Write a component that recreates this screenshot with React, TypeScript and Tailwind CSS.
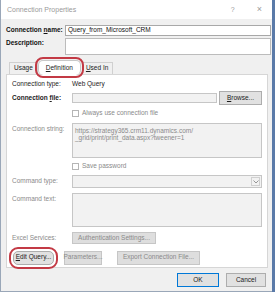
import React from "react";

const txt = "text-[6.5px] leading-none font-['Liberation_Sans',Arial,sans-serif]";

const Button = ({
  children,
  className = "",
  disabled = false,
}: {
  children: React.ReactNode;
  className?: string;
  disabled?: boolean;
}) => (
  <div
    className={`flex items-center justify-center border ${
      disabled
        ? "border-[#c6c6c6] bg-[#dedede] text-[#8a8a8a]"
        : "border-[#adadad] bg-[#e1e1e1] text-[#1a1a1a]"
    } ${className}`}
  >
    {children}
  </div>
);

const Checkbox = ({ label }: { label: string }) => (
  <div className="flex items-center gap-[3px] text-[#8a8a8a]">
    <div className="w-[7px] h-[7px] border border-[#b5b5b5] bg-white" />
    <span>{label}</span>
  </div>
);

export default function App() {
  return (
    <div className={`w-[275px] h-[292px] flex bg-[#f0f0f0] ${txt}`}>
      <div className="w-[272px] h-full flex flex-col border-l border-b border-[#9aa7b8] bg-[#f0f0f0]">
        {/* title bar */}
        <div className="h-[19px] bg-white flex items-center pl-[6px] pr-[10px] text-[#9a9a9a] text-[7px]">
          <span className="flex-1">Connection Properties</span>
          <span className="mr-[22px]">?</span>
          <span className="text-[9px]">×</span>
        </div>

        <div className="flex flex-col pl-[5px] pr-[1px] pt-[6px]">
          <div className="flex items-center h-[11px]">
            <span className="w-[59px] font-bold text-[#111]">
              Connection <u>n</u>ame:
            </span>
            <div className="flex-1 h-[11px] border border-[#a8a8a8] bg-white flex items-center pl-[2px] text-[#111]">
              Query_from_Microsoft_CRM
            </div>
          </div>
          <div className="flex mt-[2px]">
            <span className="w-[59px] font-bold text-[#111] pt-[2px]">Description:</span>
            <div className="flex-1 h-[17px] border border-[#bcbcbc] bg-white" />
          </div>
        </div>

        {/* tabs */}
        <div className="flex flex-col pl-[5px] pr-[4px] mt-[3px]">
          <div className="flex items-end h-[16px] pl-[3px] text-[#222]">
            <div className="h-[12px] px-[4px] flex items-center border border-b-0 border-[#d0d0d0] bg-[#f0f0f0]">
              Usage
            </div>
            <div className="h-[15px] px-[7px] flex items-center border border-b-0 border-[#c8c8c8] bg-white -mb-px z-10 outline-2 outline-[#c33a45] outline-offset-[1px] rounded-[5px]">
              <span>
                <u>D</u>efinition
              </span>
            </div>
            <div className="h-[12px] px-[4px] flex items-center border border-b-0 border-l-0 border-[#d0d0d0] bg-[#f0f0f0] ml-[1px]">
              <span>
                <u>U</u>sed In
              </span>
            </div>
          </div>

          <div className="h-[194px] border border-[#d6d6d6] bg-white flex flex-col px-[5px] pt-[4px]">
            <div className="flex items-center h-[10px] text-[#222]">
              <span className="w-[60px]">Connection type:</span>
              <span>Web Query</span>
            </div>

            <div className="flex items-center h-[14px] mt-[2px]">
              <span className="w-[60px] font-bold text-[#222]">
                Connection <u>f</u>ile:
              </span>
              <div className="w-[145px] h-[10px] border border-[#c6c6c6] bg-[#f2f2f2]" />
              <div className="flex-1" />
              <Button className="w-[43px] h-[14px]">
                <span>
                  <u>B</u>rowse...
                </span>
              </Button>
            </div>

            <div className="flex items-center h-[9px] mt-[4px] pl-[60px]">
              <Checkbox label="Always use connection file" />
            </div>

            <div className="flex mt-[5px]">
              <span className="w-[60px] text-[#8a8a8a] pt-[3px]">Connection string:</span>
              <div className="flex-1 h-[35px] border border-[#c6c6c6] bg-[#f2f2f2] pl-[2px] pt-[3px] text-[#8a8a8a] leading-[7px]">
                https://strategy365.crm11.dynamics.com/
                <br />
                _grid/print/print_data.aspx?tweener=1
              </div>
            </div>

            <div className="flex items-center h-[8px] mt-[4px] pl-[60px]">
              <Checkbox label="Save password" />
            </div>

            <div className="flex items-center mt-[5px]">
              <span className="w-[60px] text-[#8a8a8a]">Command type:</span>
              <div className="flex-1 h-[13px] border border-[#c6c6c6] bg-[#f2f2f2] flex justify-end items-center pr-[1px]">
                <div className="w-[9px] h-[9px] border border-[#d0d0d0] flex items-center justify-center">
                  <svg width="6" height="4" viewBox="0 0 6 4">
                    <path d="M0.5 0.5 L3 3 L5.5 0.5" fill="none" stroke="#8a8a8a" strokeWidth="0.9" />
                  </svg>
                </div>
              </div>
            </div>

            <div className="flex mt-[5px]">
              <span className="w-[60px] text-[#8a8a8a] pt-[3px]">Command text:</span>
              <div className="flex-1 h-[34px] border border-[#c6c6c6] bg-[#f2f2f2]" />
            </div>

            <div className="flex items-center h-[12px] mt-[5px]">
              <span className="w-[60px] text-[#8a8a8a]">Excel Services:</span>
              <Button disabled className="w-[84px] h-[12px]">
                Authentication Settings...
              </Button>
            </div>

            <div className="flex items-center h-[15px] mt-[6px] pl-[1px]">
              <Button className="w-[41px] h-[14px] outline-2 outline-[#c33a45] outline-offset-[2px] rounded-[5px]">
                <span>
                  <u>E</u>dit Query...
                </span>
              </Button>
              <Button disabled className="w-[38px] h-[14px] ml-[10px]">
                Parameters...
              </Button>
              <Button disabled className="w-[83px] h-[14px] ml-[15px]">
                Export Connection File...
              </Button>
            </div>
          </div>
        </div>

        <div className="flex justify-end gap-[7px] pr-[6px] mt-[5px]">
          <Button className="w-[42px] h-[14px] !border-[#0078d7]">OK</Button>
          <Button className="w-[40px] h-[14px]">Cancel</Button>
        </div>
      </div>
      <div className="w-[3px] h-full bg-[#5a7aa8]" />
    </div>
  );
}
